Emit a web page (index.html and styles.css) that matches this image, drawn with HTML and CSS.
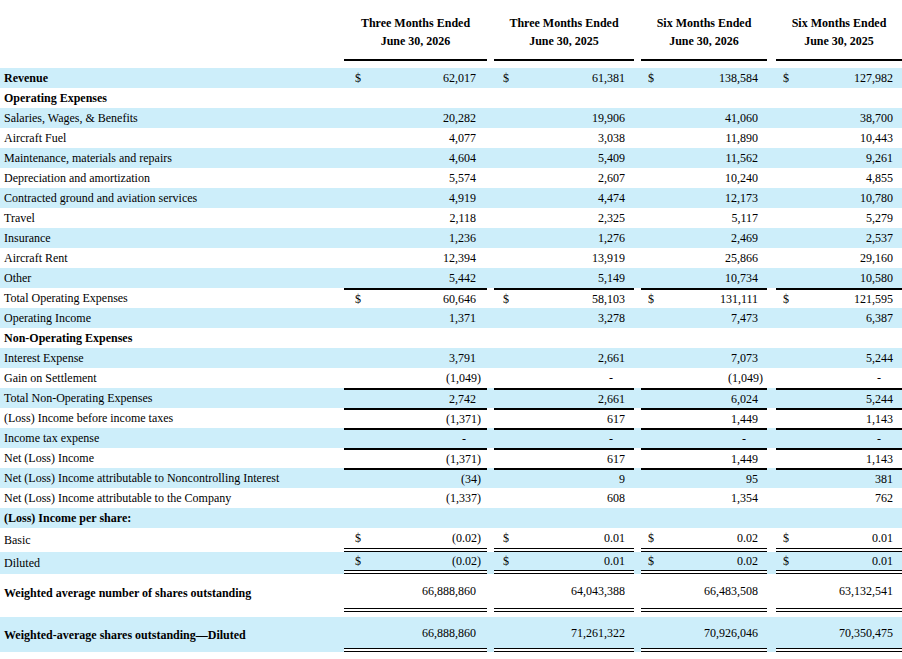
FILE: index.html
```html
<!DOCTYPE html>
<html lang="en">
<head>
  <meta charset="UTF-8" />
  <title>Condensed Statements of Operations</title>
  <meta name="viewport" content="width=device-width, initial-scale=1" />
  <link rel="stylesheet" href="styles.css">
</head>
<body>
  <table class="stmt">
    <colgroup>
      <col class="c-label">
      <col class="c-g1"><col class="c-gap1">
      <col class="c-g2"><col class="c-gap2">
      <col class="c-g3"><col class="c-gap3">
      <col class="c-g4">
    </colgroup>
    <thead>
      <tr>
        <th></th>
        <th class="grp">Three Months Ended<br>June 30, 2026</th><th></th>
        <th class="grp">Three Months Ended<br>June 30, 2025</th><th></th>
        <th class="grp">Six Months Ended<br>June 30, 2026</th><th></th>
        <th class="grp">Six Months Ended<br>June 30, 2025</th>
      </tr>
      <tr class="spacer"><td colspan="8"></td></tr>
    </thead>
    <tbody>
      <tr class="blue">
        <td class="label b">Revenue</td>
        <td class="amt"><span class="cur">$</span>62,017</td><td></td>
        <td class="amt"><span class="cur">$</span>61,381</td><td></td>
        <td class="amt"><span class="cur">$</span>138,584</td><td></td>
        <td class="amt"><span class="cur">$</span>127,982</td>
      </tr>
      <tr>
        <td class="label b">Operating Expenses</td>
        <td class="amt"></td><td></td><td class="amt"></td><td></td><td class="amt"></td><td></td><td class="amt"></td>
      </tr>
      <tr class="blue">
        <td class="label">Salaries, Wages, &amp; Benefits</td>
        <td class="amt">20,282</td><td></td><td class="amt">19,906</td><td></td><td class="amt">41,060</td><td></td><td class="amt">38,700</td>
      </tr>
      <tr>
        <td class="label">Aircraft Fuel</td>
        <td class="amt">4,077</td><td></td><td class="amt">3,038</td><td></td><td class="amt">11,890</td><td></td><td class="amt">10,443</td>
      </tr>
      <tr class="blue">
        <td class="label">Maintenance, materials and repairs</td>
        <td class="amt">4,604</td><td></td><td class="amt">5,409</td><td></td><td class="amt">11,562</td><td></td><td class="amt">9,261</td>
      </tr>
      <tr>
        <td class="label">Depreciation and amortization</td>
        <td class="amt">5,574</td><td></td><td class="amt">2,607</td><td></td><td class="amt">10,240</td><td></td><td class="amt">4,855</td>
      </tr>
      <tr class="blue">
        <td class="label">Contracted ground and aviation services</td>
        <td class="amt">4,919</td><td></td><td class="amt">4,474</td><td></td><td class="amt">12,173</td><td></td><td class="amt">10,780</td>
      </tr>
      <tr>
        <td class="label">Travel</td>
        <td class="amt">2,118</td><td></td><td class="amt">2,325</td><td></td><td class="amt">5,117</td><td></td><td class="amt">5,279</td>
      </tr>
      <tr class="blue">
        <td class="label">Insurance</td>
        <td class="amt">1,236</td><td></td><td class="amt">1,276</td><td></td><td class="amt">2,469</td><td></td><td class="amt">2,537</td>
      </tr>
      <tr>
        <td class="label">Aircraft Rent</td>
        <td class="amt">12,394</td><td></td><td class="amt">13,919</td><td></td><td class="amt">25,866</td><td></td><td class="amt">29,160</td>
      </tr>
      <tr class="blue">
        <td class="label">Other</td>
        <td class="amt">5,442</td><td></td><td class="amt">5,149</td><td></td><td class="amt">10,734</td><td></td><td class="amt">10,580</td>
      </tr>
      <tr class="total">
        <td class="label">Total Operating Expenses</td>
        <td class="amt"><span class="cur">$</span>60,646</td><td></td>
        <td class="amt"><span class="cur">$</span>58,103</td><td></td>
        <td class="amt"><span class="cur">$</span>131,111</td><td></td>
        <td class="amt"><span class="cur">$</span>121,595</td>
      </tr>
      <tr class="blue">
        <td class="label">Operating Income</td>
        <td class="amt">1,371</td><td></td><td class="amt">3,278</td><td></td><td class="amt">7,473</td><td></td><td class="amt">6,387</td>
      </tr>
      <tr>
        <td class="label b">Non-Operating Expenses</td>
        <td class="amt"></td><td></td><td class="amt"></td><td></td><td class="amt"></td><td></td><td class="amt"></td>
      </tr>
      <tr class="blue">
        <td class="label">Interest Expense</td>
        <td class="amt">3,791</td><td></td><td class="amt">2,661</td><td></td><td class="amt">7,073</td><td></td><td class="amt">5,244</td>
      </tr>
      <tr>
        <td class="label">Gain on Settlement</td>
        <td class="amt"><span class="neg">(1,049)</span></td><td></td><td class="amt dash">-</td><td></td><td class="amt"><span class="neg">(1,049)</span></td><td></td><td class="amt dash">-</td>
      </tr>
      <tr class="blue total">
        <td class="label">Total Non-Operating Expenses</td>
        <td class="amt">2,742</td><td></td><td class="amt">2,661</td><td></td><td class="amt">6,024</td><td></td><td class="amt">5,244</td>
      </tr>
      <tr class="total">
        <td class="label">(Loss) Income before income taxes</td>
        <td class="amt"><span class="neg">(1,371)</span></td><td></td><td class="amt">617</td><td></td><td class="amt">1,449</td><td></td><td class="amt">1,143</td>
      </tr>
      <tr class="blue total">
        <td class="label">Income tax expense</td>
        <td class="amt dash">-</td><td></td><td class="amt dash">-</td><td></td><td class="amt dash">-</td><td></td><td class="amt dash">-</td>
      </tr>
      <tr class="total">
        <td class="label">Net (Loss) Income</td>
        <td class="amt"><span class="neg">(1,371)</span></td><td></td><td class="amt">617</td><td></td><td class="amt">1,449</td><td></td><td class="amt">1,143</td>
      </tr>
      <tr class="blue total">
        <td class="label">Net (Loss) Income attributable to Noncontrolling Interest</td>
        <td class="amt"><span class="neg">(34)</span></td><td></td><td class="amt">9</td><td></td><td class="amt">95</td><td></td><td class="amt">381</td>
      </tr>
      <tr>
        <td class="label">Net (Loss) Income attributable to the Company</td>
        <td class="amt"><span class="neg">(1,337)</span></td><td></td><td class="amt">608</td><td></td><td class="amt">1,354</td><td></td><td class="amt">762</td>
      </tr>
      <tr class="blue">
        <td class="label b">(Loss) Income per share:</td>
        <td class="amt"></td><td></td><td class="amt"></td><td></td><td class="amt"></td><td></td><td class="amt"></td>
      </tr>
      <tr class="dbl">
        <td class="label">Basic</td>
        <td class="amt"><span class="cur">$</span><span class="neg">(0.02)</span></td><td></td>
        <td class="amt"><span class="cur">$</span>0.01</td><td></td>
        <td class="amt"><span class="cur">$</span>0.02</td><td></td>
        <td class="amt"><span class="cur">$</span>0.01</td>
      </tr>
      <tr class="blue dbl tight">
        <td class="label">Diluted</td>
        <td class="amt"><span class="cur">$</span><span class="neg">(0.02)</span></td><td></td>
        <td class="amt"><span class="cur">$</span>0.01</td><td></td>
        <td class="amt"><span class="cur">$</span>0.02</td><td></td>
        <td class="amt"><span class="cur">$</span>0.01</td>
      </tr>
      <tr class="dbl shares">
        <td class="label b">Weighted average number of shares outstanding</td>
        <td class="amt">66,888,860</td><td></td><td class="amt">64,043,388</td><td></td><td class="amt">66,483,508</td><td></td><td class="amt">63,132,541</td>
      </tr>
      <tr class="gaprow"><td colspan="8"></td></tr>
      <tr class="blue dbl shares-dil">
        <td class="label b">Weighted-average shares outstanding—Diluted</td>
        <td class="amt">66,888,860</td><td></td><td class="amt">71,261,322</td><td></td><td class="amt">70,926,046</td><td></td><td class="amt">70,350,475</td>
      </tr>
    </tbody>
  </table>
</body>
</html>
```

FILE: styles.css
```css
body {
  margin: 0;
  background: #fff;
  font-family: "Liberation Serif", "Times New Roman", serif;
  font-size: 12px;
  color: #000;
}
.stmt {
  width: 902px;
  table-layout: fixed;
  border-collapse: separate;
  border-spacing: 0;
}
.c-label { width: 344px; }
.c-g1 { width: 143px; }
.c-gap1 { width: 7px; }
.c-g2 { width: 140px; }
.c-gap2 { width: 7px; }
.c-g3 { width: 126px; }
.c-gap3 { width: 9px; }
.c-g4 { width: 126px; }

th {
  padding: 14px 0 9px;
  line-height: 18px;
  font-weight: bold;
  text-align: center;
  vertical-align: bottom;
}
th.grp {
  border-bottom: 2px solid #000;
}
.spacer td {
  height: 7px;
  padding: 0;
  line-height: 0;
}

td {
  padding: 0;
  line-height: 20px;
  white-space: nowrap;
  background-clip: padding-box;
}
.blue td {
  background-color: #cdeefa;
}
.label {
  padding-left: 4px;
  overflow: hidden;
}
.b {
  font-weight: bold;
}
.amt {
  text-align: right;
  padding: 0 9px 0 7px;
}
.amt:nth-child(2) {
  padding: 0 11px 0 11px;
}
.amt:nth-child(4) {
  padding: 0 9px 0 9px;
}
.amt.dash {
  padding-right: 21px;
}
.cur {
  float: left;
}
.neg {
  margin-right: -5px;
}

/* subtotal rules */
.total .amt {
  border-top: 2px solid #000;
  line-height: 18px;
}

/* double rules under per share and share counts */
.dbl .amt {
  border-bottom: 4px double #000;
}
.dbl.tight .amt {
  line-height: 18px;
}
.shares td {
  line-height: 34px;
}
.gaprow td {
  height: 5px;
  padding: 0;
  line-height: 0;
}
.shares-dil td {
  padding-top: 1px;
  line-height: 30px;
}
.shares-dil .amt:nth-child(n) {
  padding-top: 1px;
}
```
